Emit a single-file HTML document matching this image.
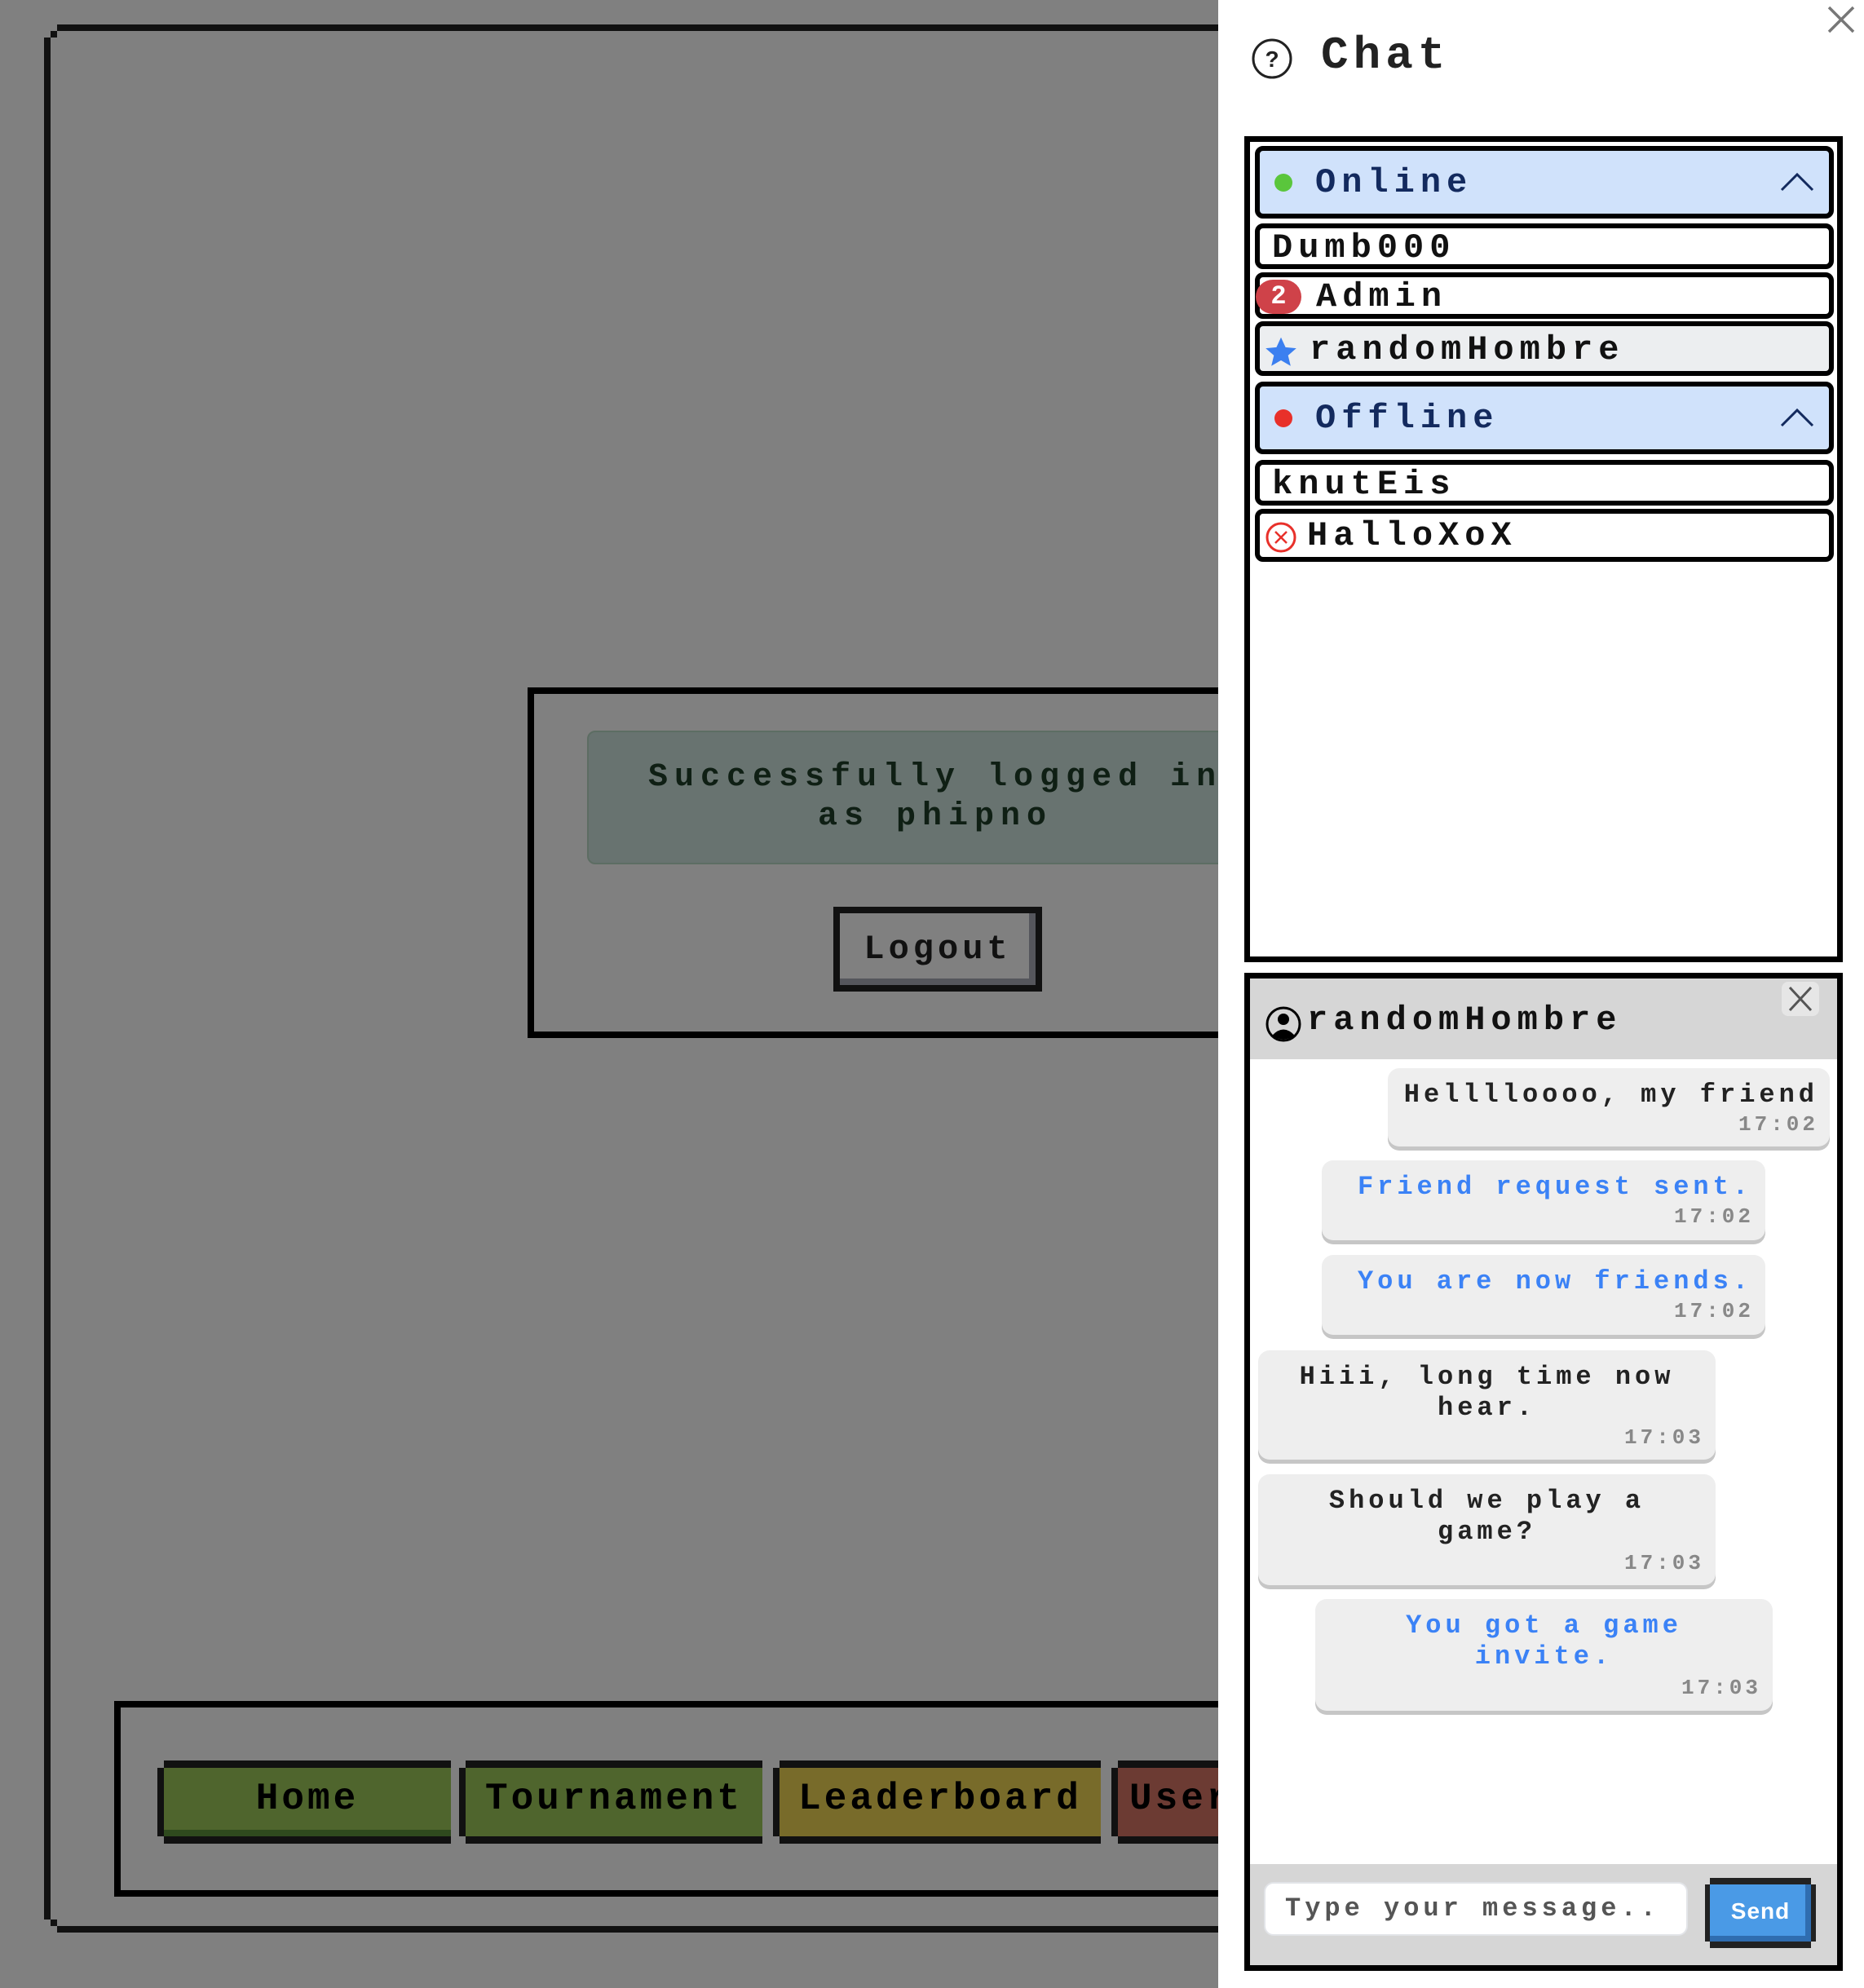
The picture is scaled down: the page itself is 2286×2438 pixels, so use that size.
<!DOCTYPE html>
<html><head><meta charset="utf-8"><style>
*{margin:0;padding:0;box-sizing:border-box}
body{width:2286px;height:2438px;position:relative;overflow:hidden;background:#808080;font-family:"Liberation Mono","DejaVu Sans Mono",monospace;font-weight:bold}
.a{position:absolute}
.t{position:absolute;white-space:nowrap}
.row{position:absolute;left:1543px;width:710px;border:6px solid #000;border-radius:10px;background:#fff}
.hdr{background:#d0e2fb}
.rt{position:absolute;font-size:42px;letter-spacing:7px;color:#111;line-height:1;white-space:nowrap}
.bub{position:absolute;background:#eee;border-radius:14px;box-shadow:0 5px 0 #c6c6c6;text-align:center;font-size:32px;letter-spacing:5px;color:#222;line-height:38px}
.tm{position:absolute;right:14px;font-size:26px;letter-spacing:4px;color:#888}
.blue{color:#3b82f6}
.nb{position:absolute;top:2159px;height:102px;border-top:9px solid #111;border-bottom:9px solid #111;font-size:46px;letter-spacing:4px;color:#000;text-align:center;line-height:76px}
.nb:before{content:"";position:absolute;left:-8px;top:0;bottom:0;border-left:8px solid #111}
#p{position:absolute;left:-4px;top:0;width:2290px;height:2438px}
</style></head><body>
<div class="a" style="left:54px;top:46px;width:8px;height:2308px;background:#111"></div>
<div class="a" style="left:62px;top:38px;width:8px;height:8px;background:#111"></div>
<div class="a" style="left:70px;top:30px;width:1500px;height:8px;background:#111"></div>
<div class="a" style="left:62px;top:2354px;width:8px;height:8px;background:#111"></div>
<div class="a" style="left:70px;top:2362px;width:1500px;height:8px;background:#111"></div>

<div class="a" style="left:647px;top:843px;width:1100px;height:430px;border:8px solid #000"></div>
<div class="a" style="left:720px;top:896px;width:1100px;height:164px;background:#687370;border:2px solid #5d6d63;border-radius:10px"></div>
<div class="t" style="left:795px;top:930px;font-size:40px;letter-spacing:8px;color:#0f1f14;line-height:48px">Successfully logged in</div>
<div class="t" style="left:1003px;top:978px;font-size:40px;letter-spacing:8px;color:#0f1f14;line-height:48px">as phipno</div>
<div class="a" style="left:1022px;top:1112px;width:256px;height:104px;border-top:8px solid #111;border-bottom:8px solid #111"></div>
<div class="a" style="left:1022px;top:1120px;width:256px;height:88px;border-left:8px solid #111;border-right:8px solid #111;box-shadow:inset -8px -8px 0 #55565c"></div>
<div class="t" style="left:1022px;top:1130px;width:256px;text-align:center;font-size:42px;letter-spacing:5px;color:#111;line-height:68px">Logout</div>

<div class="a" style="left:140px;top:2086px;width:1500px;height:240px;border:8px solid #000"></div>
<div class="nb" style="left:201px;width:352px;background:#4f652d;box-shadow:inset -8px -20px 0 -12px #2f4a1e">Home</div>
<div class="nb" style="left:571px;width:364px;background:#4f652d">Tournament</div>
<div class="nb" style="left:956px;width:394px;background:#786b2a">Leaderboard</div>
<div class="nb" style="left:1371px;width:300px;background:#6c3b33;text-align:left;padding-left:14px">User</div>

<div id="p">
<div class="a" style="left:1498px;top:0;width:792px;height:2438px;background:#fff"></div>
<svg class="a" style="left:2244px;top:6px" width="36" height="36" viewBox="0 0 36 36"><path d="M3 3L33 33M33 3L3 33" stroke="#777" stroke-width="3.5"/></svg>
<svg class="a" style="left:1538px;top:46px" width="52" height="52" viewBox="0 0 52 52"><circle cx="26" cy="26" r="23" fill="none" stroke="#222" stroke-width="3"/><text x="26" y="36" text-anchor="middle" font-family="Liberation Sans" font-size="28" fill="#222">?</text></svg>
<div class="t" style="left:1624px;top:38px;font-size:56px;letter-spacing:6px;color:#222;line-height:60px">Chat</div>

<div class="a" style="left:1530px;top:167px;width:734px;height:1013px;border:7px solid #000"></div>
<div class="row hdr" style="top:179px;height:89px"></div>
<div class="a" style="left:1567px;top:213px;width:22px;height:22px;border-radius:50%;background:#5ac63c"></div>
<div class="rt" style="left:1617px;top:203px;color:#132a5e">Online</div>
<svg class="a" style="left:2186px;top:210px" width="44" height="26" viewBox="0 0 44 26"><path d="M3 23L22 4L41 23" fill="none" stroke="#132a5e" stroke-width="3"/></svg>
<div class="row" style="top:274px;height:56px"></div>
<div class="rt" style="left:1564px;top:283px">Dumb000</div>
<div class="row" style="top:334px;height:57px"></div>
<div class="a" style="left:1544px;top:343px;width:56px;height:42px;border-radius:21px;background:#cf4249;color:#fff;font-size:32px;line-height:42px;text-align:center">2</div>
<div class="rt" style="left:1618px;top:343px">Admin</div>
<div class="row" style="top:394px;height:67px;background:#eceef0"></div>
<svg class="a" style="left:1554px;top:412px" width="42" height="40" viewBox="0 0 24 23"><path d="M12 1l3.2 7 7.6.7-5.8 5 1.8 7.4L12 17.2 5.2 21.1 7 13.7 1.2 8.7l7.6-.7z" fill="#3b7ff0"/></svg>
<div class="rt" style="left:1610px;top:408px">randomHombre</div>
<div class="row hdr" style="top:468px;height:89px"></div>
<div class="a" style="left:1567px;top:502px;width:22px;height:22px;border-radius:50%;background:#e8302a"></div>
<div class="rt" style="left:1617px;top:492px;color:#132a5e">Offline</div>
<svg class="a" style="left:2186px;top:499px" width="44" height="26" viewBox="0 0 44 26"><path d="M3 23L22 4L41 23" fill="none" stroke="#132a5e" stroke-width="3"/></svg>
<div class="row" style="top:564px;height:56px"></div>
<div class="rt" style="left:1564px;top:573px">knutEis</div>
<div class="row" style="top:624px;height:65px"></div>
<svg class="a" style="left:1555px;top:639px" width="40" height="40" viewBox="0 0 40 40"><circle cx="20" cy="20" r="17" fill="none" stroke="#e8302a" stroke-width="3"/><path d="M13 13L27 27M27 13L13 27" stroke="#e8302a" stroke-width="2.5"/></svg>
<div class="rt" style="left:1607px;top:636px">HalloXoX</div>

<div class="a" style="left:1530px;top:1193px;width:734px;height:1224px;border:7px solid #000;background:#fff"></div>
<div class="a" style="left:1537px;top:1200px;width:720px;height:99px;background:#d6d6d6"></div>
<svg class="a" style="left:1555px;top:1233px" width="46" height="46" viewBox="0 0 46 46"><circle cx="23" cy="23" r="20" fill="none" stroke="#000" stroke-width="3"/><circle cx="23" cy="17" r="7" fill="#000"/><path d="M9 37Q23 22 37 37Q23 46 9 37z" fill="#000"/></svg>
<div class="rt" style="left:1607px;top:1230px">randomHombre</div>
<div class="a" style="left:2189px;top:1204px;width:46px;height:42px;background:#e6e6e6;border-radius:8px"></div>
<svg class="a" style="left:2196px;top:1208px" width="32" height="34" viewBox="0 0 32 34"><path d="M3 3L29 31M29 3L3 31" stroke="#555" stroke-width="3"/></svg>

<div class="bub" style="left:1706px;top:1310px;width:542px;height:96px"><div class="t" style="right:14px;top:14px">Helllloooo, my friend</div><div class="tm" style="top:50px">17:02</div></div>
<div class="bub" style="left:1625px;top:1423px;width:544px;height:98px"><div class="t blue" style="right:16px;top:14px">Friend request sent.</div><div class="tm" style="top:50px">17:02</div></div>
<div class="bub" style="left:1625px;top:1539px;width:544px;height:98px"><div class="t blue" style="right:16px;top:14px">You are now friends.</div><div class="tm" style="top:50px">17:02</div></div>
<div class="bub" style="left:1547px;top:1656px;width:561px;height:134px;padding-top:14px">Hiii, long time now<br>hear.<div class="tm" style="top:88px">17:03</div></div>
<div class="bub" style="left:1547px;top:1808px;width:561px;height:136px;padding-top:14px">Should we play a<br>game?<div class="tm" style="top:90px">17:03</div></div>
<div class="bub blue" style="left:1617px;top:1961px;width:561px;height:137px;padding-top:14px">You got a game<br>invite.<div class="tm" style="top:90px">17:03</div></div>

<div class="a" style="left:1537px;top:2286px;width:720px;height:124px;background:#d6d6d6"></div>
<div class="a" style="left:1554px;top:2308px;width:520px;height:66px;background:#fff;border:2px solid #e2e4e8;border-radius:12px"></div>
<div class="t" style="left:1580px;top:2322px;font-size:32px;letter-spacing:5px;color:#555;line-height:38px">Type your message..</div>
<div class="a" style="left:2101px;top:2303px;width:124px;height:86px;border-top:8px solid #222;border-bottom:8px solid #222"></div>
<div class="a" style="left:2095px;top:2311px;width:136px;height:70px;background:#4a9ae6;border-left:6px solid #222;border-right:6px solid #222;box-shadow:inset -7px -7px 0 #2f6db0"></div>
<div class="t" style="left:2095px;top:2311px;width:136px;text-align:center;font-family:'Liberation Sans',sans-serif;font-size:28px;color:#fff;line-height:66px;letter-spacing:1px">Send</div>
</div>
</body></html>
